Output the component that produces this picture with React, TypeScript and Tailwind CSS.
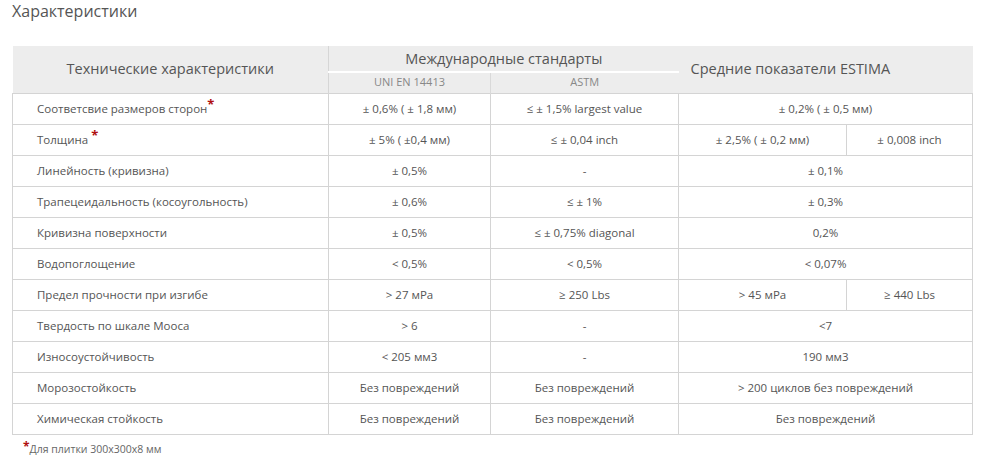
const rows: { name: string; star?: boolean; cells: { v: string; span?: number }[] }[] = [
  { name: 'Соответсвие размеров сторон', star: true, cells: [{ v: '± 0,6% ( ± 1,8 мм)' }, { v: '≤ ± 1,5% largest value' }, { v: '± 0,2% ( ± 0,5 мм)', span: 2 }] },
  { name: 'Толщина ', star: true, cells: [{ v: '± 5% ( ±0,4 мм)' }, { v: '≤ ± 0,04 inch' }, { v: '± 2,5% ( ± 0,2 мм)' }, { v: '± 0,008 inch' }] },
  { name: 'Линейность (кривизна)', cells: [{ v: '± 0,5%' }, { v: '-' }, { v: '± 0,1%', span: 2 }] },
  { name: 'Трапецеидальность (косоугольность)', cells: [{ v: '± 0,6%' }, { v: '≤ ± 1%' }, { v: '± 0,3%', span: 2 }] },
  { name: 'Кривизна поверхности', cells: [{ v: '± 0,5%' }, { v: '≤ ± 0,75% diagonal' }, { v: '0,2%', span: 2 }] },
  { name: 'Водопоглощение', cells: [{ v: '< 0,5%' }, { v: '< 0,5%' }, { v: '< 0,07%', span: 2 }] },
  { name: 'Предел прочности при изгибе', cells: [{ v: '> 27 мPa' }, { v: '≥ 250 Lbs' }, { v: '> 45 мPa' }, { v: '≥ 440 Lbs' }] },
  { name: 'Твердость по шкале Мооса', cells: [{ v: '> 6' }, { v: '-' }, { v: '<7', span: 2 }] },
  { name: 'Износоустойчивость', cells: [{ v: '< 205 мм3' }, { v: '-' }, { v: '190 мм3', span: 2 }] },
  { name: 'Морозостойкость', cells: [{ v: 'Без повреждений' }, { v: 'Без повреждений' }, { v: '> 200 циклов без повреждений', span: 2 }] },
  { name: 'Химическая стойкость', cells: [{ v: 'Без повреждений' }, { v: 'Без повреждений' }, { v: 'Без повреждений', span: 2 }] },
]

export default function App() {
  return (
    <div className="w-[993px] h-[458px] bg-white pl-3 text-[#555] font-['Open_Sans',sans-serif] overflow-hidden">
      <h2 className="text-[16px] leading-[22px] text-[#555] font-normal">Характеристики</h2>

      <table className="mt-[24px] w-[960px] border-collapse table-fixed">
        <colgroup>
          <col className="w-[316px]" />
          <col className="w-[162px]" />
          <col className="w-[188px]" />
          <col className="w-[168px]" />
          <col className="w-[126px]" />
        </colgroup>
        <thead className="bg-[#ededed]">
          <tr>
            <th rowSpan={2} className="h-[47px] font-normal text-[14.5px] text-[#555] border-r border-[#d6d6d6]">
              Технические характеристики
            </th>
            <th colSpan={2} className="h-[25px] font-normal text-[14.5px] text-[#555] border-b-2 border-white pt-[2px]">
              Международные стандарты
            </th>
            <th colSpan={2} rowSpan={2} className="font-normal text-[14.5px] text-[#555] text-left pl-[12px]">
              Средние показатели ESTIMA
            </th>
          </tr>
          <tr>
            <th className="h-[21px] font-normal text-[11px] text-[#888] border-r border-[#d9d9d9]">UNI EN 14413</th>
            <th className="h-[21px] font-normal text-[11px] text-[#888]">ASTM</th>
          </tr>
        </thead>
        <tbody className="text-[11.5px]">
          {rows.map((r) => (
            <tr key={r.name} className="h-[31px]">
              <td className="border border-[#d4d4d4] pl-[24px] pt-[1px]">
                {r.name}
                {r.star && <span className="text-[#b01010] font-bold text-[13px] relative top-[-4px]">*</span>}
              </td>
              {r.cells.map((c, i) => (
                <td key={i} colSpan={c.span} className="border border-[#d4d4d4] text-center pt-[1px]">
                  {c.v}
                </td>
              ))}
            </tr>
          ))}
        </tbody>
      </table>

      <p className="mt-[5px] pl-[11px] text-[10.5px] text-[#666]">
        <span className="text-[#b01010] font-bold text-[12px] relative top-[-2px]">*</span>Для плитки 300x300x8 мм
      </p>
    </div>
  )
}
